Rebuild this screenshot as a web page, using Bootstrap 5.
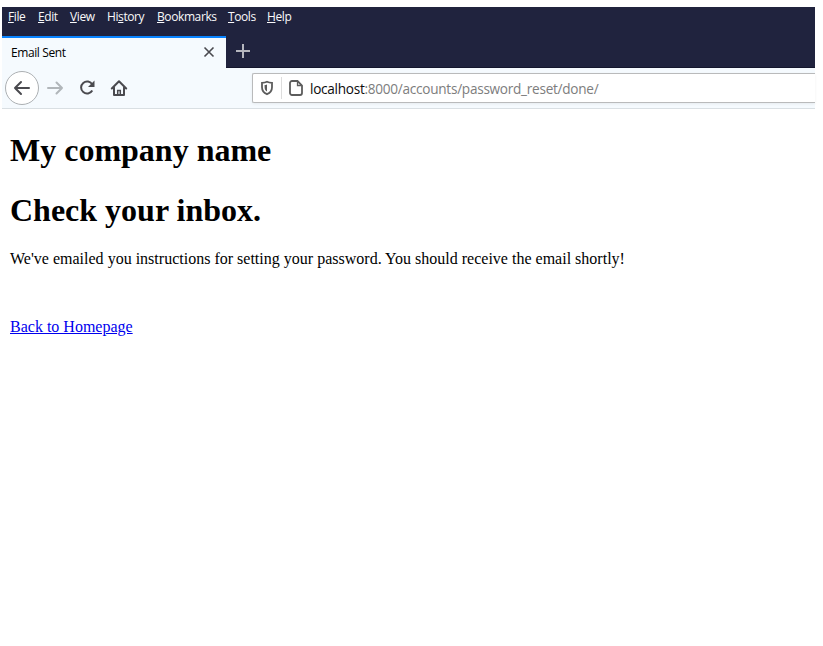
<!DOCTYPE html>
<html lang="en">
<head>
<meta charset="utf-8">
<meta name="viewport" content="width=device-width, initial-scale=1">
<title>Email Sent</title>
<link href="https://cdn.jsdelivr.net/npm/bootstrap@5.3.0/dist/css/bootstrap.min.css" rel="stylesheet">
<style>
body{background:#fff;font-family:"Open Sans","Noto Sans",sans-serif;color:#000}
.browser{width:813px;margin:7px 0 0 2px}
.chrome-top{background:#20233e;height:61px;border-bottom:1px solid #14162d}
.menus{height:29px;padding:1px 0 0 6px;font-size:12px;letter-spacing:-.4px;line-height:18px;color:#f9f9fa;display:grid;grid-template-columns:30px 32px 37px 50px 71px 39px 40px;white-space:nowrap}
.page-tab{width:224px;height:32px;margin-bottom:-1px;background:#f5fafe;border-top:2px solid #0a84ff;padding:0 11px 0 9px;font-size:12px;letter-spacing:-.4px}
.tab-icon{margin-bottom:2px}
.tools{height:41px;background:#f5fafe;border-bottom:1px solid #d9dfe3;padding-left:3px}
.back{width:34px;height:34px;border:1px solid #acb0b3;background:#fff}
.reload{margin-left:13px}
.home{margin-left:14px}
.address{width:563px;height:30px;margin-left:auto;border:1px solid #b9babb;border-right:0;border-radius:2px 0 0 2px;background:#fff;padding-left:7px;font-size:13.600px;letter-spacing:-.270px;color:#7d7d7d;box-shadow:0 1px 3px #00000010}
.address b{font-weight:400;color:#0c0c0d}
.url{margin-left:7px;padding-top:2px}
.sep{width:1px;height:22px;background:#ddd;margin:0 7px 0 7px}
.document{padding:23px 8px 0;font:16px/18px "Liberation Serif",serif}
.document h1{font:bold 32px/36px "Liberation Serif",serif;margin:0 0 24px;color:#000}
.document h1 + p{margin:-2px 0 50px;letter-spacing:.006px}
.document a{color:#00e}
svg{display:block;fill:none;stroke:#4a4a4f;stroke-width:2}
</style>
</head>
<body>
<div class="browser">
  <div class="chrome-top">
    <div class="menus"><span><u>F</u>ile</span><span><u>E</u>dit</span><span><u>V</u>iew</span><span>Hi<u>s</u>tory</span><span><u>B</u>ookmarks</span><span><u>T</u>ools</span><span><u>H</u>elp</span></div>
    <div class="d-flex align-items-center">
      <div class="page-tab d-flex align-items-center justify-content-between"><span>Email Sent</span>
        <svg class="tab-icon" width="12" height="12" viewBox="0 0 12 12"><path d="M1.500 1.500l9 9m0-9l-9 9" stroke-width="1.600"/></svg>
      </div>
      <svg class="tab-icon ms-2" width="18" height="16" viewBox="0 0 18 16"><path d="M9 1v14M2 8h14" stroke="#b5b6be"/></svg>
    </div>
  </div>
  <div class="tools d-flex align-items-center">
    <div class="back rounded-circle d-flex align-items-center justify-content-center">
      <svg width="18" height="16" viewBox="0 0 18 16" stroke-linecap="round" stroke-linejoin="round"><path d="M16 8H2M8 2L2 8l6 6"/></svg>
    </div>
    <svg width="18" height="16" viewBox="0 0 18 16" class="ms-2" stroke-linecap="round" stroke-linejoin="round"><path d="M1 8h14M9.500 2.500L15 8l-5.500 5.500" stroke="#b1b6ba"/></svg>
    <svg width="18" height="18" viewBox="0 0 18 18" class="reload"><path d="M14.300 5.500A6 6 0 1 0 14.300 11.500"/><path d="M16.500 1.500v6.500h-6.500z" fill="#4a4a4f" stroke="none"/></svg>
    <svg width="18" height="18" viewBox="0 0 18 18" class="home"><path d="M1.800 9.500L9 2.300l7.200 7.200M4 8.500V16h10V8.500" stroke-linejoin="round" stroke-linecap="round"/><path d="M7.700 15.500v-4h2.600v4" stroke-width="1.500"/></svg>
    <div class="address d-flex align-items-center">
      <svg width="14" height="16" viewBox="0 0 14 16"><path d="M7 1.800c1.600.8 3.300 1 5 1v4.400c0 3.400-2 5.800-5 7-3-1.200-5-3.600-5-7V2.800c1.700 0 3.400-.2 5-1z" stroke="#5c5c5c" stroke-width="1.800"/><path d="M7 4.500v7C5.300 10.500 4.600 9 4.600 7.200V5c.8 0 1.600-.1 2.400-.5z" fill="#5c5c5c" stroke="none"/></svg>
      <span class="sep"></span>
      <svg width="14" height="16" viewBox="0 0 14 16"><path d="M3 1h5.500L13 5.500V13a2 2 0 0 1-2 2H3a2 2 0 0 1-2-2V3a2 2 0 0 1 2-2z" stroke="#5c5c5c" stroke-width="1.800"/><path d="M8.500 1v4.500H13" stroke="#5c5c5c" stroke-width="1.300"/></svg>
      <span class="url"><b>localhost</b>:8000/accounts/password_reset/done/</span>
    </div>
  </div>
  <main class="document">
    <h1>My company name</h1>
    <h1>Check your inbox.</h1>
    <p>We've emailed you instructions for setting your password. You should receive the email shortly!</p>
    <a href="#">Back to Homepage</a>
  </main>
</div>
<script src="https://cdn.jsdelivr.net/npm/bootstrap@5.3.0/dist/js/bootstrap.bundle.min.js"></script>
</body>
</html>
